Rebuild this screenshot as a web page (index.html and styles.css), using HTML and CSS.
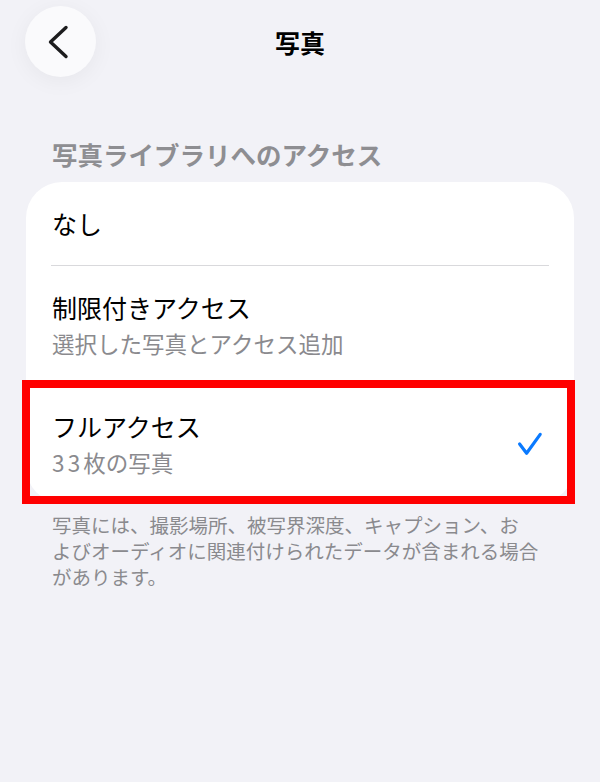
FILE: index.html
```html
<!DOCTYPE html>
<html lang="ja">
<head>
<meta charset="utf-8">
<title>写真</title>
<link rel="stylesheet" href="styles.css">
</head>
<body>
<div class="screen">
  <header class="nav">
    <div class="nav-left">
      <button class="back" aria-label="戻る">
        <svg width="71" height="71" viewBox="0 0 71 71"><path d="M41 21.5 L25.5 36 L41 50.5" fill="none" stroke="#1c1c1e" stroke-width="3.4" stroke-linecap="round" stroke-linejoin="round"/></svg>
      </button>
    </div>
    <h1 class="title">写真</h1>
    <div class="nav-right"></div>
  </header>

  <h2 class="section-header">写真ライブラリへのアクセス</h2>

  <div class="card">
    <div class="row row-single">
      <span class="row-title">なし</span>
    </div>
    <div class="sep"></div>
    <div class="row">
      <div class="row-text">
        <span class="row-title">制限付きアクセス</span>
        <span class="row-sub">選択した写真とアクセス追加</span>
      </div>
    </div>
    <div class="sep"></div>
    <div class="row">
      <div class="row-text">
        <span class="row-title">フルアクセス</span>
        <span class="row-sub"><span class="num">33</span>枚の写真</span>
      </div>
      <svg class="check" width="28" height="28" viewBox="0 0 28 28"><path d="M3.6 14 L10.6 23.2 L24.2 4.4" fill="none" stroke="#0a7aff" stroke-width="3.2" stroke-linecap="round" stroke-linejoin="round"/></svg>
    </div>
    <div class="highlight"></div>
  </div>

  <p class="footer">写真には、撮影場所、被写界深度、キャプション、お<br>よびオーディオに関連付けられたデータが含まれる場合<br>があります。</p>
</div>
</body>
</html>
```

FILE: styles.css
```css
html, body {
  margin: 0;
  padding: 0;
  background: #f2f2f7;
}

body {
  font-family: "Noto Sans CJK JP", "Noto Sans", sans-serif;
  color: #000;
}

.screen {
  width: 600px;
  min-height: 782px;
  background: #f2f2f7;
}

.nav {
  display: grid;
  grid-template-columns: 1fr auto 1fr;
  align-items: center;
  padding: 6px 25px 0 25px;
}

.back {
  display: block;
  width: 71px;
  height: 71px;
  padding: 0;
  border: none;
  border-radius: 50%;
  background: #fafafc;
  box-shadow: 0 4px 22px rgba(0, 0, 0, 0.05);
}

.back svg {
  display: block;
}

.title {
  margin: 0;
  font-size: 25px;
  line-height: 36px;
  font-weight: 700;
}

.section-header {
  margin: 60px 0 11px 52px;
  font-size: 25.5px;
  line-height: 34px;
  font-weight: 600;
  color: #8e8e92;
}

.card {
  position: relative;
  margin: 0 26px;
  background: #fff;
  border-radius: 36px;
}

.row {
  display: flex;
  align-items: center;
  justify-content: space-between;
  padding: 23px 30px 23px 26px;
}

.row-text {
  display: flex;
  flex-direction: column;
}

.row-title {
  font-size: 25px;
  line-height: 36px;
}

.row-single .row-title {
  line-height: 37px;
}

.row-sub {
  font-size: 22.5px;
  line-height: 36px;
  color: #8a8a8e;
}

.num {
  letter-spacing: 0.14em;
}

.sep {
  height: 1px;
  margin: 0 25px;
  background: #d9d9dc;
}

.check {
  display: block;
  flex: none;
}

.highlight {
  position: absolute;
  left: -4px;
  right: -1px;
  top: 198px;
  height: 124px;
  box-sizing: border-box;
  border: 8px solid #ff0000;
}

.footer {
  margin: 9px 0 0 52px;
  font-size: 19.5px;
  line-height: 26px;
  color: #8a8a8e;
}
```
